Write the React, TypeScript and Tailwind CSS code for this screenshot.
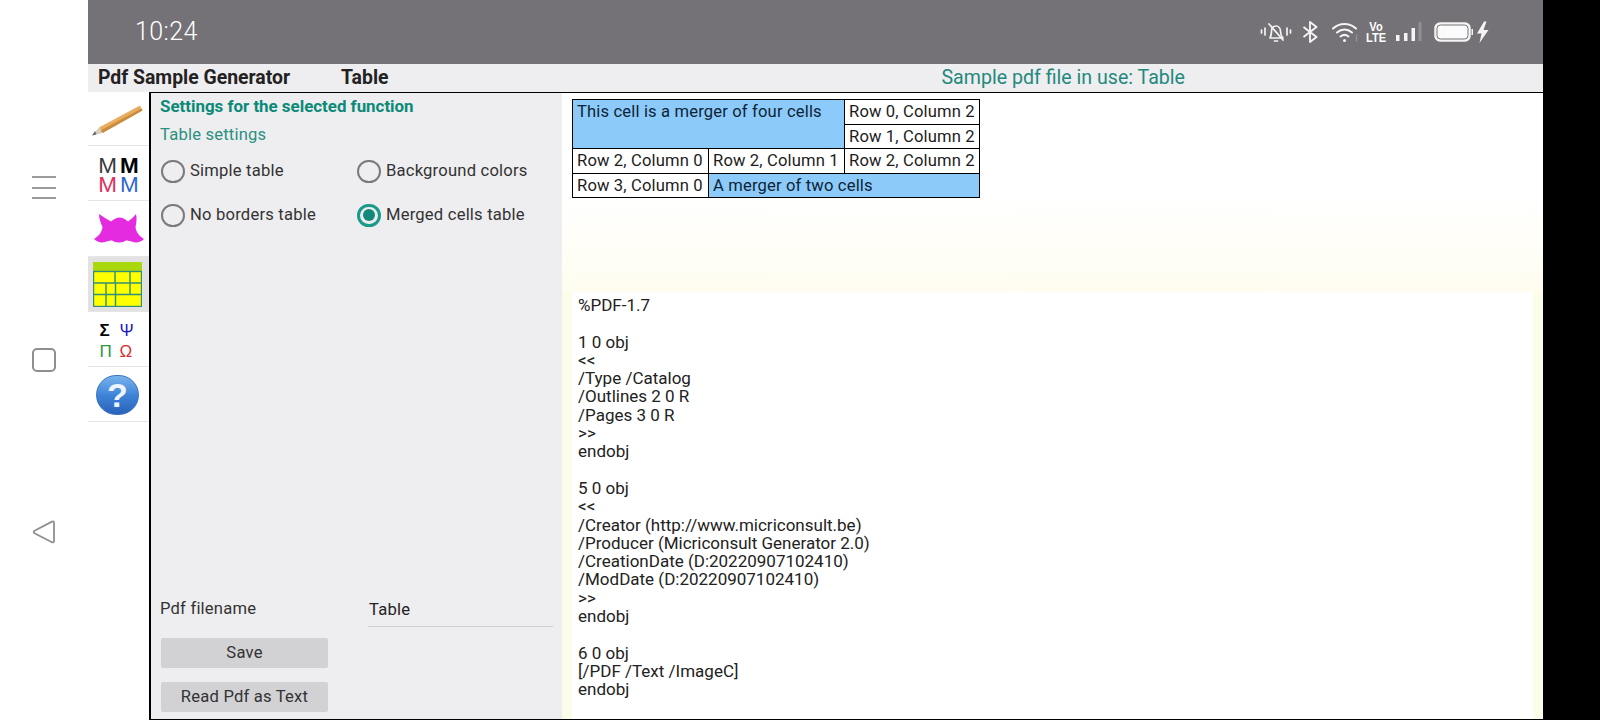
import React from "react";

const pdfText = `%PDF-1.7

1 0 obj
<<
/Type /Catalog
/Outlines 2 0 R
/Pages 3 0 R
>>
endobj

5 0 obj
<<
/Creator (http://www.micriconsult.be)
/Producer (Micriconsult Generator 2.0)
/CreationDate (D:20220907102410)
/ModDate (D:20220907102410)
>>
endobj

6 0 obj
[/PDF /Text /ImageC]
endobj`;

function Radio({ label, checked }: { label: string; checked?: boolean }) {
  return (
    <div className="flex items-center gap-[5px] h-[24px]">
      {checked ? (
        <div className="w-[24px] h-[23px] rounded-full border-[3px] border-[#1a9a88] flex items-center justify-center shrink-0">
          <div className="w-[12px] h-[12px] rounded-full bg-[#12897a]" />
        </div>
      ) : (
        <div className="w-[24px] h-[23px] rounded-full border-[2.5px] border-[#7a797b] shrink-0" />
      )}
      <span className="text-[16.6px] text-[#333] tracking-[0.2px] whitespace-nowrap">{label}</span>
    </div>
  );
}

function Cell({ children, blue, ...rest }: { children: React.ReactNode; blue?: boolean; colSpan?: number; rowSpan?: number }) {
  return (
    <td
      {...rest}
      className={`border border-black px-[4px] pt-[1px] pb-0 align-top leading-[22.5px] whitespace-nowrap ${blue ? "bg-[#8ccafa] text-[#0d2436]" : "bg-white text-[#1c1c1c]"}`}
    >
      {children}
    </td>
  );
}

function SideItem({ children, active, tall }: { children: React.ReactNode; active?: boolean; tall?: "s" | "l" }) {
  const h = tall === "s" ? "h-[54px]" : tall === "l" ? "h-[56px]" : "h-[55px]";
  return (
    <div className={`relative ${h} flex items-center justify-center border-b border-[#e6e6e6] ${active ? "bg-[#e2e2e2]" : "bg-white"}`}>
      {children}
    </div>
  );
}

export default function App() {
  return (
    <div className="flex w-[1600px] h-[720px] bg-black overflow-hidden font-['Roboto',sans-serif]">
      {/* Android navigation bar */}
      <div className="w-[88px] h-full bg-white pl-[32px] pt-[176px] flex flex-col shrink-0">
        <div className="w-[24px] h-[23px] flex flex-col justify-between">
          <div className="h-[2px] bg-[#9b9b9b]" />
          <div className="h-[2px] bg-[#9b9b9b]" />
          <div className="h-[2px] bg-[#9b9b9b]" />
        </div>
        <div className="w-[24px] h-[24px] mt-[149px] rounded-[5px] border-2 border-[#8f8f8f]" />
        <svg className="mt-[148px]" width="24" height="24" viewBox="0 0 24 24" fill="none">
          <path d="M22 2.500 L22 21 Q22 23 20 22.200 L2.500 13.200 Q1 12 2.500 10.800 L20 1.600 Q22 1 22 2.500 Z" stroke="#8f8f8f" strokeWidth="1.800" strokeLinejoin="round" />
        </svg>
      </div>

      <div className="w-[1455px] flex flex-col shrink-0">
        {/* Status bar */}
        <div className="h-[64px] bg-[#747276] flex items-center pl-[47px] pr-[53px] text-white">
          <span className="text-[25px] font-light tracking-[0.4px]">10:24</span>
          <div className="ml-auto flex items-center">
            <svg width="32" height="24" viewBox="0 0 32 24" fill="none" stroke="#f4f4f4" strokeWidth="1.700" strokeLinecap="round" strokeLinejoin="round">
              <path d="M1.500 10v3M5 8v7M27 8v7M30.500 10v3" />
              <path d="M10 18h13c-1.800-1.800-2.500-3-2.500-6.500 0-3.500-2-5.500-4.500-5.500s-4.500 2-4.500 5.500c0 3.500-.7 4.700-1.500 6.500z" />
              <path d="M9 4l14 16" />
              <path d="M14.500 21h3" />
            </svg>
            <svg className="ml-[10px]" width="16" height="22" viewBox="0 0 16 22" fill="none" stroke="#f4f4f4" strokeWidth="1.900" strokeLinejoin="round">
              <path d="M1.500 6l13 10-6.500 5V1l6.500 5-13 10" />
            </svg>
            <svg className="ml-[14px]" width="27" height="22" viewBox="0 0 27 22" fill="none" stroke="#f4f4f4" strokeWidth="2" strokeLinecap="round">
              <path d="M1 7.500C7.500 1.500 17.500 1.500 24 7.500" />
              <path d="M5 11.500C9.500 7.500 15.500 7.500 20 11.500" />
              <path d="M8.500 15.500C11 13.500 14 13.500 16.500 15.500" />
              <circle cx="12.500" cy="19.500" r="1.500" fill="#f4f4f4" stroke="none" />
              <path d="M24.500 14v6" stroke="#8f8e91" strokeWidth="1.500" />
            </svg>
            <div className="ml-[9px] w-[16px] flex flex-col items-center font-['Liberation_Sans',sans-serif] font-bold text-[13px] leading-[11px] scale-x-[0.85]">
              <span>Vo</span>
              <span>LTE</span>
            </div>
            <svg className="ml-[12px]" width="26" height="22" viewBox="0 0 26 22">
              <rect x="0" y="14" width="3.500" height="6" fill="#f4f4f4" />
              <rect x="8" y="12" width="3.500" height="8" fill="#f4f4f4" />
              <rect x="15.500" y="7" width="3.500" height="13" fill="#f4f4f4" />
              <rect x="22.500" y="1" width="3" height="19" fill="#8f8e91" />
            </svg>
            <svg className="ml-[12px]" width="56" height="24" viewBox="0 0 56 24">
              <rect x="1" y="3" width="35" height="18" rx="5" fill="#f4f4f4" stroke="#f4f4f4" strokeWidth="1.500" />
              <rect x="3" y="5" width="31" height="14" rx="3.500" fill="#fbfbfb" stroke="#747276" strokeWidth="1" />
              <rect x="37.500" y="9" width="1.500" height="6" fill="#f4f4f4" />
              <path d="M50 1.500L43 13.500h4.500L45.500 23l9-13h-5l3-8.500z" fill="#f4f4f4" />
            </svg>
          </div>
        </div>

        {/* Title bar */}
        <div className="h-[28px] bg-[#eeedf0] flex items-center relative shrink-0">
          <span className="ml-[10px] w-[243px] text-[19.4px] font-bold text-[#222] whitespace-nowrap">Pdf Sample Generator</span>
          <span className="text-[19.4px] font-bold text-[#222]">Table</span>
          <span className="ml-[553px] text-[19.6px] text-[#23897c] whitespace-nowrap">Sample pdf file in use: Table</span>
        </div>

        {/* Body */}
        <div className="flex flex-1 min-h-0">
          {/* Function icons */}
          <div className="w-[61px] bg-white flex flex-col shrink-0">
            <SideItem tall="s">
              <svg className="-ml-[4px] mt-[2px]" width="54" height="34" viewBox="0 0 54 34">
                <path d="M9 24.500L50 2.500l2.500 5L12.500 30z" fill="#e8ad5e" />
                <path d="M10.500 27.500L51.500 5.500l1 2L12.500 30z" fill="#c98c3e" />
                <path d="M9 24.500L12.500 30 2 32.500z" fill="#d9cdbb" />
                <path d="M2 32.500L5 28l1.500 3.500z" fill="#6b6b6b" />
              </svg>
            </SideItem>
            <SideItem>
              <div className="grid grid-cols-2 gap-x-[3px] mt-[4px] font-['Liberation_Sans',sans-serif] text-[22.5px] leading-[19px]">
                <span className="text-[#3a3a3a]">M</span>
                <span className="text-black font-bold">M</span>
                <span className="text-[#e0305f]">M</span>
                <span className="text-[#2f66cf]">M</span>
              </div>
            </SideItem>
            <SideItem tall="l">
              <svg className="mt-[1px]" width="50" height="30" viewBox="0 0 50 30">
                <path d="M0 25 C5 22 8 18 8.500 13 C6.500 9 5 4 5 0 C9 3 13 5 17 7.500 C20 5 23.500 3.500 25.500 3.500 C28 3.500 31 5 34 7.500 C37 5 40 3 42 0 C43 4 42.500 9 41.500 13 C42 18 45 22 50 25 C47 28 43 29 39 28 C36 27 34 26.500 32 26.500 C29 29 21 29 18 26.500 C16 26.500 14 27 11 28 C7 29 3 28 0 25 Z" fill="#e52be0" />
              </svg>
            </SideItem>
            <SideItem active>
              <svg className="-ml-[2px]" width="49" height="45" viewBox="0 0 49 45">
                <rect x="0" y="0" width="49" height="9" fill="#a9d90c" />
                <rect x=".5" y="9.500" width="48" height="35" fill="#ffff00" stroke="#2f8f78" strokeWidth="1.400" />
                <path d="M0.500 21h48M0.500 32.500h48M22 9.500v11.500M37 9.500v23M13 21v23.500M22.500 21v23.500" stroke="#2f8f78" strokeWidth="1.400" fill="none" />
              </svg>
            </SideItem>
            <SideItem>
              <div className="grid grid-cols-[20px_16px] gap-y-[4px] mt-[4px] font-['Liberation_Sans',sans-serif] text-[17px] leading-[17px] -ml-[2px]">
                <span className="text-black font-bold">Σ</span>
                <span className="text-[#1b1bc4]">Ψ</span>
                <span className="text-[#2f9440]">Π</span>
                <span className="text-[#d93030]">Ω</span>
              </div>
            </SideItem>
            <SideItem>
              <div className="w-[43px] h-[40px] mt-[2px] -ml-[2px] rounded-full bg-gradient-to-b from-[#79b3ec] via-[#3f84d8] to-[#2a62ba] flex items-center justify-center border border-[#3c74c4]">
                <span className="font-['Liberation_Sans',sans-serif] font-bold text-[34px] leading-none text-[#eef4fb]">?</span>
              </div>
            </SideItem>
          </div>

          {/* Main panel */}
          <div className="flex-1 flex border-l-2 border-t border-b border-black min-w-0">
            <div className="w-[411px] bg-[#eeedf0] flex flex-col shrink-0 pl-[9px] pb-[7px] pt-[3px]">
              <div className="text-[16.9px] leading-[20px] font-bold text-[#0b8a78] whitespace-nowrap">Settings for the selected function</div>
              <div className="mt-[9px] text-[16.6px] leading-[20px] text-[#2a917f] tracking-[0.2px]">Table settings</div>
              <div className="mt-[14px] ml-[1px] grid grid-cols-[196px_1fr] gap-y-[20px]">
                <Radio label="Simple table" />
                <Radio label="Background colors" />
                <Radio label="No borders table" />
                <Radio label="Merged cells table" checked />
              </div>
              <div className="mt-auto flex flex-col">
                <div className="flex items-end">
                  <span className="w-[208px] text-[16.6px] leading-[20px] text-[#333] tracking-[0.2px] mb-[8px]">Pdf filename</span>
                  <div className="w-[185px] border-b border-[#d0d0d2] h-[32px] pl-[1px] pt-[3px] text-[16.6px] text-[#222] tracking-[0.2px]">Table</div>
                </div>
                <button className="mt-[11px] ml-[1px] w-[167px] h-[30px] bg-[#d2d1d4] rounded-[2px] text-[16.6px] text-[#333] tracking-[0.2px]">Save</button>
                <button className="mt-[14px] ml-[1px] w-[167px] h-[30px] bg-[#d2d1d4] rounded-[2px] text-[16.6px] text-[#333] tracking-[0.2px]">Read Pdf as Text</button>
              </div>
            </div>

            <div className="flex-1 flex flex-col min-w-0 bg-[#fcfde9]">
              <div className="h-[199px] bg-gradient-to-b from-white via-white to-[#fffdf0] pl-[10px] pt-[6px] shrink-0">
                <table className="border-collapse border border-black text-[16.6px] tracking-[0.15px] w-[407px] table-fixed">
                  <colgroup>
                    <col className="w-[136px]" />
                    <col className="w-[136px]" />
                    <col className="w-[135px]" />
                  </colgroup>
                  <tbody>
                    <tr>
                      <Cell blue colSpan={2} rowSpan={2}>This cell is a merger of four cells</Cell>
                      <Cell>Row 0, Column 2</Cell>
                    </tr>
                    <tr>
                      <Cell>Row 1, Column 2</Cell>
                    </tr>
                    <tr>
                      <Cell>Row 2, Column 0</Cell>
                      <Cell>Row 2, Column 1</Cell>
                      <Cell>Row 2, Column 2</Cell>
                    </tr>
                    <tr>
                      <Cell>Row 3, Column 0</Cell>
                      <Cell blue colSpan={2}>A merger of two cells</Cell>
                    </tr>
                  </tbody>
                </table>
              </div>
              <div className="flex-1 mx-[10px] bg-white pl-[6px] pt-[4px] overflow-hidden">
                <pre className="font-['Roboto',sans-serif] text-[17px] leading-[18.300px] text-[#222]">{pdfText}</pre>
              </div>
            </div>
          </div>
        </div>
      </div>
    </div>
  );
}
